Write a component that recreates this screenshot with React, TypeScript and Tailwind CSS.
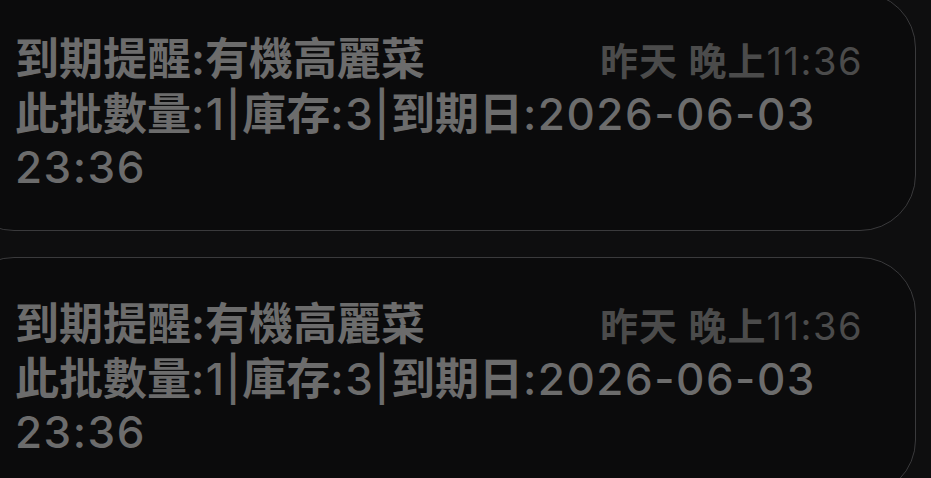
import React from "react";

const font = { fontFamily: 'Inter, "Noto Sans CJK TC", "Noto Sans CJK SC", sans-serif' };

function L({ children }: { children: React.ReactNode }) {
  return <span className="font-medium tracking-[1.5px]">{children}</span>;
}

function Card() {
  return (
    <div className="w-[958px] h-[239px] rounded-[56px] border-[1.5px] border-[#3a3a3c] bg-[#0b0b0c] pl-[56px] pr-[52px] pt-[39px]">
      <div className="flex items-baseline justify-between">
        <div className="text-[44px] leading-[54px] font-semibold text-[#6c6c6c]">到期提醒:有機高麗菜</div>
        <div className="text-[38px] leading-[54px] font-medium text-[#4b4b4b]">
          <span className="font-semibold tracking-[1px]">昨天 晚上</span>
          <span className="font-normal tracking-[1.5px]">11:36</span>
        </div>
      </div>
      <div className="text-[44px] leading-[53px] font-semibold text-[#6c6c6c]">
        此批數量<L>:1|</L>庫存<L>:3|</L>到期日<L>:2026-06-03 23:36</L>
      </div>
    </div>
  );
}

export default function App() {
  return (
    <div className="w-[931px] h-[478px] overflow-hidden bg-[#0e0e0f]" style={font}>
      <div className="-ml-[42px] -mt-[8px] flex flex-col gap-[26px]">
        <Card />
        <Card />
      </div>
    </div>
  );
}
